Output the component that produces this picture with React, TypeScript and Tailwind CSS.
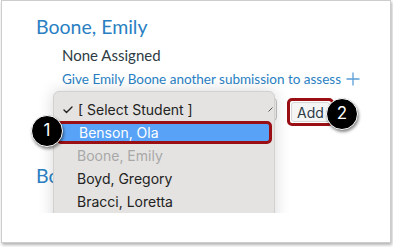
import { Check } from 'lucide-react'

const students = [
  { name: 'Benson, Ola', active: true },
  { name: 'Boone, Emily', disabled: true },
  { name: 'Boyd, Gregory' },
  { name: 'Bracci, Loretta' },
]

function Badge({ n }: { n: number }) {
  return (
    <div className="w-[32px] h-[32px] rounded-full bg-black border-[1.5px] border-white shadow-[1px_2px_3px_rgba(0,0,0,0.45)] flex items-center justify-center text-white text-[17px] font-['Inter',sans-serif]">
      {n}
    </div>
  )
}

export default function App() {
  return (
    <div className="w-[393px] h-[247px] bg-white overflow-hidden">
      <div className="relative ml-[1px] w-[390px] h-[243px] bg-white border border-[#cdcdcd] shadow-[1px_2px_3px_rgba(0,0,0,0.3)] overflow-hidden font-['Lato','Noto_Sans',sans-serif] pl-[34px] pt-[14px]">
        {/* Assessor header */}
        <h2 className="text-[19.5px] leading-[24px] text-[#2a7fc3]">Boone, Emily</h2>
        <div className="pl-[26px]">
          <p className="mt-[6px] text-[15px] leading-[20px] text-[#2d3b45]">None Assigned</p>
          <p className="mt-[5px] text-[13.5px] leading-[18px] text-[#2a7fc3] flex items-center gap-[5px]">
            Give Emily Boone another submission to assess
            <svg width="14" height="14" viewBox="0 0 14 14">
              <path d="M7 0.5 V13.5 M0.5 7 H13.5" stroke="#5a9fd6" strokeWidth="1.3" />
            </svg>
          </p>
          <div className="flex items-start">
            <div className="-ml-[9px] mt-[9px] w-[224px] h-[25px] rounded-[5px] border border-[#c4c4c4] bg-[#f4f4f4]" />
            <div className="ml-[10px] mt-[10px] rounded-[5px] border-[3px] border-[#990f14] p-[1px]">
              <div className="h-[20px] px-[5px] rounded-[3px] bg-[#f5f5f5] border border-[#d6d6d6] flex items-center text-[14px] text-[#2d3b45] font-['Inter',sans-serif]">
                Add
              </div>
            </div>
          </div>
        </div>
        <h2 className="mt-[38px] text-[19.5px] leading-[24px] text-[#2a7fc3]">Bo</h2>

        {/* open native select menu */}
        <div className="absolute left-[20px] top-[78px] w-[280px] h-[134px] overflow-hidden">
          <div className="absolute left-[31px] top-[12px] w-[222px] h-[140px] rounded-[6px] bg-[#e4e3e1] border border-[#d2d1cf] shadow-[0_0_16px_rgba(0,0,0,0.16)] pt-[6px] font-['Inter',sans-serif] text-[14px] text-[#222]">
            <div className="h-[23px] flex items-center pl-[8px]">
              <Check className="w-[12px] h-[12px]" strokeWidth={2.8} />
              <span className="ml-[4px]">[ Select Student ]</span>
            </div>
            {students.map((s) =>
              s.active ? (
                <div key={s.name} className="mx-[2px] h-[23px] flex items-center pl-[20px] rounded-[5px] border-[3px] border-[#990f14] bg-[#58a2f7] text-white">
                  {s.name}
                </div>
              ) : (
                <div key={s.name} className={`h-[23px] flex items-center pl-[23px] ${s.disabled ? 'text-[#a8a8a8]' : ''}`}>
                  {s.name}
                </div>
              ),
            )}
            <svg className="absolute right-[1px] top-[15px]" width="5" height="5" viewBox="0 0 5 5">
              <path d="M0.5 4.5 L4.5 0.5" stroke="#555" strokeWidth="1" />
            </svg>
          </div>
        </div>

        <div className="absolute left-[29px] top-[114px]">
          <Badge n={1} />
        </div>
        <div className="absolute left-[324px] top-[97px]">
          <Badge n={2} />
        </div>
      </div>
    </div>
  )
}
